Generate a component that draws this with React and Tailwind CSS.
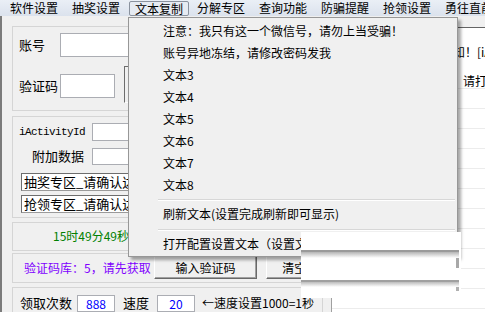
export default function App() {
  const menuBar = ["软件设置", "抽奖设置", "文本复制", "分解专区", "查询功能", "防骗提醒", "抢领设置", "勇往直前"];
  const items = [
    "注意：我只有这一个微信号，请勿上当受骗！",
    "账号异地冻结，请修改密码发我",
    "文本3",
    "文本4",
    "文本5",
    "文本6",
    "文本7",
    "文本8",
  ];
  const rows = Array.from({ length: 12 });
  const input = "bg-white border border-[#abadb3]";
  const sunkBox = "bg-white border border-[#9a9a9a] border-t-[#6d6d6d] border-l-[#6d6d6d]";
  const button =
    "bg-[#f0f0f0] border border-t-white border-l-white border-r-[#696969] border-b-[#696969] shadow-[inset_-1px_-1px_0_#a0a0a0] flex items-center justify-center";
  return (
    <div className="relative w-[485px] h-[312px] overflow-hidden bg-[#f0f0f0] font-['Noto_Sans_CJK_SC',sans-serif] text-[12px] text-black flex flex-col">
      {/* menu bar */}
      <div className="h-[16px] shrink-0 flex pl-[3px] whitespace-nowrap overflow-hidden bg-[linear-gradient(to_bottom,#eaeff6,#dbe2ed)]">
        {menuBar.map((m) =>
          m === "文本复制" ? (
            <div
              key={m}
              className="shrink-0 mt-[1px] ml-[2px] mr-[1px] h-[15px] px-[5px] border border-[#8a929e] rounded-[2px] bg-[#e6ebf2] leading-[13px]"
            >
              {m}
            </div>
          ) : (
            <div key={m} className="shrink-0 px-[7px] leading-[16px]">
              {m}
            </div>
          )
        )}
      </div>

      {/* content */}
      <div className="flex-1 flex min-h-0">
        <div className="w-[2px] shrink-0 bg-[#7b7b7b]" />
        <div className="w-[321px] shrink-0 pl-[10px] flex flex-col">
          {/* group 1 */}
          <div className="mt-[10px] h-[87px] border border-[#d5d5d5] pl-[6px] pt-[6px]">
            <div className="flex h-[24px] items-center">
              <div className="w-[41px] leading-[16px] text-[13px]">账号</div>
              <div className={`${input} flex-1 h-[24px]`} />
            </div>
            <div className="mt-[9px] flex items-start">
              <div className="mt-[8px] w-[41px] h-[24px] leading-[24px] text-[13px]">验证码</div>
              <div className={`${input} mt-[8px] w-[55px] h-[24px]`} />
              <div className="ml-[9px] w-[90px] h-[37px] border border-[#6d6d6d] border-r-white border-b-white" />
            </div>
          </div>

          {/* group 2 */}
          <div className="mt-[5px] h-[105px] border border-[#d5d5d5] pl-[6px] pt-[6px] pr-[6px]">
            <div className="flex h-[18px] items-center">
              <div className="w-[73px] pr-[8px] text-right font-['Liberation_Mono',monospace] text-[11px] tracking-[-0.6px] leading-[14px]">
                iActivityId
              </div>
              <div className={`${input} flex-1 h-[18px]`} />
            </div>
            <div className="mt-[7px] flex h-[17px] items-center">
              <div className="w-[73px] pr-[8px] text-right leading-[16px] text-[13px]">附加数据</div>
              <div className={`${input} flex-1 h-[17px]`} />
            </div>
            <div className={`${sunkBox} mt-[8px] ml-[2px] h-[18px] pl-[2px] text-[13px] leading-[16px] whitespace-nowrap overflow-hidden`}>
              抽奖专区_请确认达到条件后再领取
            </div>
            <div className={`${sunkBox} mt-[4px] ml-[2px] h-[18px] pl-[2px] text-[13px] leading-[16px] whitespace-nowrap overflow-hidden`}>
              抢领专区_请确认达到条件后再领取
            </div>
          </div>

          {/* group 3 */}
          <div className="mt-[4px] h-[30px] border border-[#d5d5d5] flex items-center pl-[40px] text-[#008000] leading-[16px]">
            15时49分49秒
          </div>

          {/* group 4 */}
          <div className="mt-[2px] h-[31px] border border-[#d5d5d5] flex items-center pl-[11px]">
            <div className="w-[140px] text-[#8000ff] leading-[16px] whitespace-nowrap">验证码库：5，请先获取</div>
            <div className={`${button} w-[112px] h-[23px] leading-[16px]`}>输入验证码</div>
            <div className={`${button} ml-[9px] w-[60px] h-[23px] leading-[16px]`}>清空</div>
          </div>

          {/* group 5 */}
          <div className="mt-[4px] flex-1 border border-b-0 border-[#d5d5d5] pl-[7px] pt-[7px]">
            <div className="flex h-[17px] items-center whitespace-nowrap">
              <div className="leading-[16px] text-[13px]">领取次数</div>
              <div className={`${input} ml-[5px] w-[38px] h-[17px] text-center text-[#0000ff] leading-[15px]`}>888</div>
              <div className="ml-[8px] leading-[16px] text-[13px]">速度</div>
              <div className={`${input} ml-[8px] w-[38px] h-[17px] text-center text-[#0000ff] leading-[15px]`}>20</div>
              <div className="ml-[7px] leading-[16px]">←速度设置1000=1秒</div>
            </div>
          </div>
        </div>

        {/* right panel */}
        <div className="ml-[8px] mt-[11px] flex-1 min-w-0 overflow-hidden bg-white border-t border-t-[#646464] border-l border-l-[#a0a0a0] flex flex-col">
          <div className="h-[32px] shrink-0 flex items-end pl-[121px] whitespace-nowrap">
            <div className="leading-[16px]">知！[iActivityId]</div>
          </div>
          <div className="h-[29px] shrink-0 border-b border-[#ececec] flex items-end pl-[131px] whitespace-nowrap">
            <div className="leading-[14px]">请打开</div>
          </div>
          {rows.map((_, i) => (
            <div key={i} className="h-[20px] shrink-0 border-b border-[#ececec]" />
          ))}
        </div>
      </div>

      {/* dropdown menu */}
      <div className="absolute left-[128px] top-[17px] w-[330px] h-[240px] bg-[#f0f0f0] border border-[#979797] shadow-[3px_3px_3px_rgba(0,0,0,0.35)] pt-[2px] whitespace-nowrap">
        {items.map((t) => (
          <div key={t} className="h-[22px] leading-[22px] pl-[34px]">
            {t}
          </div>
        ))}
        <div className="h-[7px] pt-[3px] pl-[29px] pr-[2px]">
          <div className="border-t border-[#d7d7d7] border-b border-b-white" />
        </div>
        <div className="h-[22px] leading-[22px] pl-[34px]">刷新文本(设置完成刷新即可显示)</div>
        <div className="h-[8px] pt-[4px] pl-[29px] pr-[2px]">
          <div className="border-t border-[#d7d7d7] border-b border-b-white" />
        </div>
        <div className="h-[22px] leading-[22px] pl-[34px]">打开配置设置文本（设置文本后刷新）</div>
      </div>

      {/* redraw glitch */}
      <div className="absolute left-[301px] top-[232px] w-[160px] h-[66px] bg-white flex flex-col">
        <div className="mt-[18px] h-[8px] w-[158px] shrink-0 border-t-2 border-[#9a9a9a] bg-[linear-gradient(to_bottom,#b4b4b4,#ffffff)]" />
        <div className="ml-[155px] h-[10px] w-[3px] shrink-0 bg-[#a8a8a8]" />
        <div className="mt-[12px] h-[7px] w-[158px] shrink-0 border-t-2 border-[#a0a0a0] bg-[linear-gradient(to_bottom,#bcbcbc,#ffffff)]" />
        <div className="ml-[155px] h-[4px] w-[3px] shrink-0 bg-[#b0b0b0]" />
      </div>
    </div>
  );
}
